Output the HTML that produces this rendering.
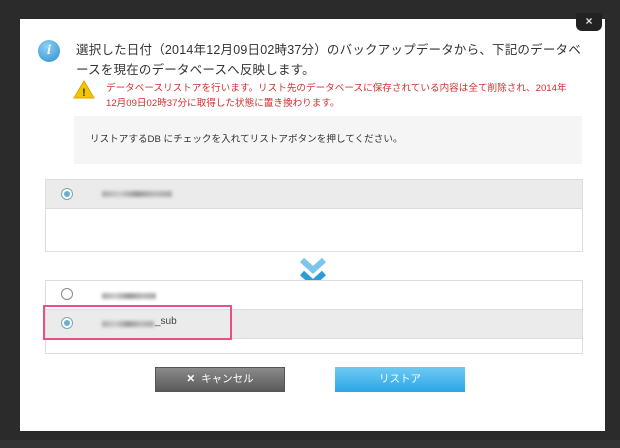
<!DOCTYPE html>
<html><head><meta charset="utf-8"><style>
body{margin:0;width:620px;height:448px;background:#2b2b2b;position:relative;overflow:hidden;font-family:"Liberation Sans","Noto Sans CJK JP",sans-serif}
.a{position:absolute}
.modal{left:20px;top:19px;width:585px;height:412px;background:#fff}
.blur{background:linear-gradient(90deg,#aaa,#ccc,#999,#bbb,#aaa);filter:blur(1.5px);height:6px}
.radio{width:10px;height:10px;border-radius:50%;border:1px solid #7aa;background:#fff}
.radio.on::after{content:"";position:absolute;left:2px;top:2px;width:6px;height:6px;border-radius:50%;background:#6aaed0}
</style></head><body>
<div class="a" style="left:0;top:440px;width:620px;height:8px;background:#333"></div>
<div class="a modal"></div>
<div class="a" style="left:576px;top:13px;width:26px;height:18px;background:#222;border-radius:0 0 6px 6px;color:#ddd;font-size:12px;text-align:center;line-height:16px;font-weight:bold">×</div>
<div class="a" style="left:38px;top:40px;width:22px;height:22px;border-radius:50%;background:radial-gradient(circle at 40% 30%,#8fd0f5,#2a8fd0);color:#fff;font:italic bold 14px 'Liberation Serif',serif;text-align:center;line-height:22px">i</div>
<div class="a" style="left:76px;top:40px;width:510px;font-size:12.5px;line-height:20px;color:#333;letter-spacing:0.2px">選択した日付（2014年12月09日02時37分）のバックアップデータから、下記のデータベースを現在のデータベースへ反映します。</div>
<svg class="a" style="left:73px;top:80px" width="22" height="19"><polygon points="11,1 21,18 1,18" fill="#f5c400" stroke="#d9a600"/><text x="11" y="16" font-size="11" font-weight="bold" text-anchor="middle" fill="#333" font-family="Liberation Sans">!</text></svg>
<div class="a" style="left:106px;top:81px;width:462px;font-size:9.6px;line-height:15px;color:#d23030">データベースリストアを行います。リスト先のデータベースに保存されている内容は全て削除され、2014年12月09日02時37分に取得した状態に置き換わります。</div>
<div class="a" style="left:74px;top:116px;width:508px;height:48px;background:#f5f5f5"></div>
<div class="a" style="left:90px;top:131px;font-size:9.6px;color:#333">リストアするDB にチェックを入れてリストアボタンを押してください。</div>
<div class="a" style="left:45px;top:179px;width:536px;height:71px;border:1px solid #ddd;background:#fff"></div>
<div class="a" style="left:46px;top:180px;width:536px;height:28px;background:#ebebeb;border-bottom:1px solid #ddd"></div>
<div class="a radio on" style="left:61px;top:188px"></div>
<div class="a blur" style="left:102px;top:191px;width:70px"></div>
<svg class="a" style="left:298px;top:256px" width="30" height="34"><path d="M4 4 L15 14 L26 4" stroke="#7cc6ee" stroke-width="6" fill="none"/><path d="M4 17 L15 27 L26 17" stroke="#2d9bd6" stroke-width="6" fill="none"/></svg>
<div class="a" style="left:45px;top:280px;width:536px;height:72px;border:1px solid #ddd;background:#fff"></div>
<div class="a" style="left:46px;top:309px;width:536px;height:28px;background:#ebebeb;border-top:1px solid #ddd;border-bottom:1px solid #ddd"></div>
<div class="a radio" style="left:61px;top:288px;border-color:#888"></div>
<div class="a blur" style="left:102px;top:293px;width:54px"></div>
<div class="a radio on" style="left:61px;top:317px"></div>
<div class="a blur" style="left:102px;top:321px;width:52px"></div>
<div class="a" style="left:155px;top:316px;font-size:10px;color:#444">_sub</div>
<div class="a" style="left:43px;top:305px;width:185px;height:31px;border:2px solid #e8508a"></div>
<div class="a" style="left:155px;top:367px;width:130px;height:25px;background:linear-gradient(#8a8a8a,#5a5a5a);border:1px solid #555;box-sizing:border-box;color:#fff;font-size:10.5px;text-align:center;line-height:23px"><b>✕</b>&nbsp; キャンセル</div>
<div class="a" style="left:335px;top:367px;width:130px;height:25px;background:linear-gradient(#6fcaf3,#2aa6e6);color:#fff;font-size:10.5px;text-align:center;line-height:25px">リストア</div>
</body></html>
